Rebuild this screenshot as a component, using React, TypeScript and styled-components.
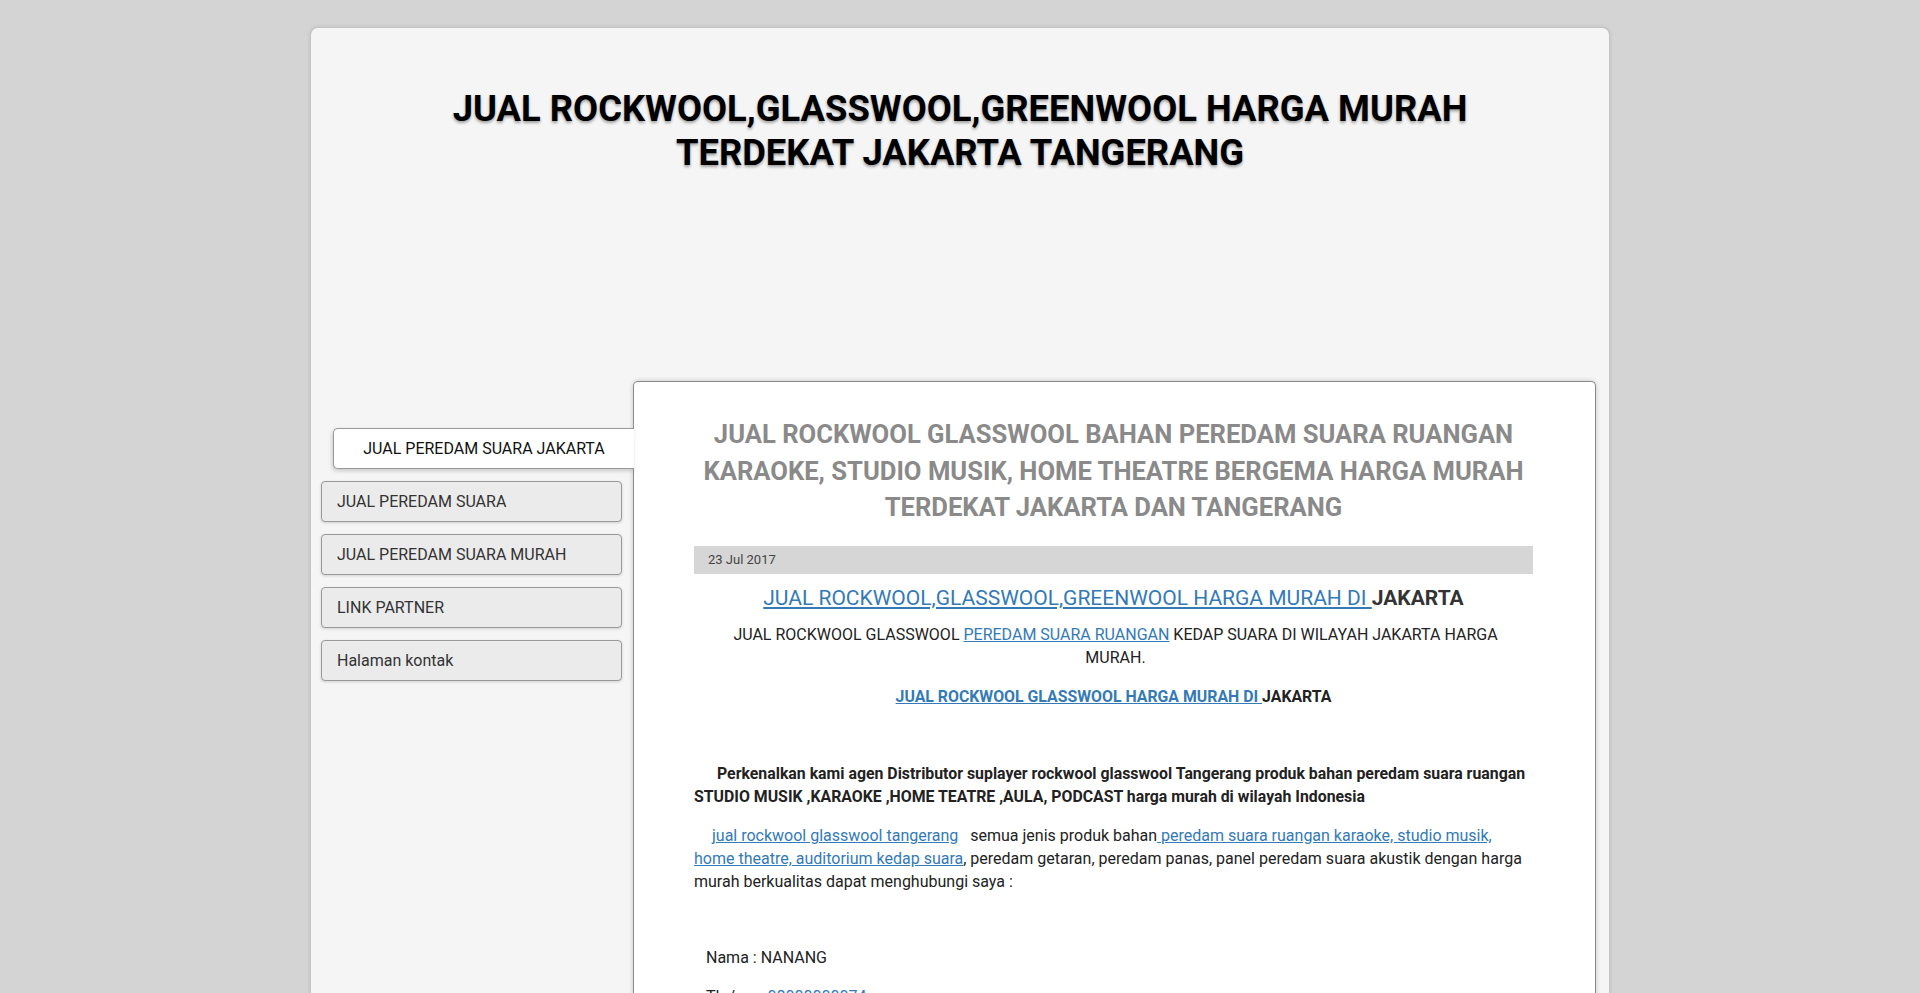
import React from "react";
import styled, { createGlobalStyle } from "styled-components";

const GlobalStyle = createGlobalStyle`
  html, body {
    margin: 0;
    padding: 0;
    background: #d4d4d4;
    font-family: Roboto, "Noto Sans", "Liberation Sans", sans-serif;
  }
  * { box-sizing: border-box; }
`;

const Page = styled.div`
  width: 1300px;
  margin: 27px auto 0;
  background: #f5f5f5;
  border: 1px solid #c4c4c4;
  border-bottom: none;
  border-radius: 8px 8px 0 0;
  box-shadow: 0 0 4px rgba(0, 0, 0, 0.12);
  min-height: 980px;
`;

const Header = styled.header`
  height: 353px;
  padding-top: 59px;
  text-align: center;
`;

const SiteTitle = styled.h1`
  margin: 0 auto;
  width: 1100px;
  font-size: 36.4px;
  line-height: 44px;
  font-weight: 700;
  color: #000;
  text-shadow: 0 2px 3px rgba(0, 0, 0, 0.35);
`;

const Body = styled.div`
  display: flex;
  align-items: flex-start;
  padding-left: 10px;
`;

const Sidebar = styled.nav`
  width: 312px;
  flex-shrink: 0;
  padding-top: 47px;
  display: flex;
  flex-direction: column;
  gap: 12px;
`;

const MenuItem = styled.a<{ $active?: boolean }>`
  display: flex;
  align-items: center;
  height: 41px;
  font-size: 16px;
  color: ${(p) => (p.$active ? "#111" : "#333")};
  text-decoration: none;
  border: 1px solid #999;
  border-radius: 4px;
  ${(p) =>
    p.$active
      ? `
    margin-left: 12px;
    margin-right: -1px;
    justify-content: center;
    background: #fff;
    border-right: none;
    border-radius: 5px 0 0 5px;
    box-shadow: -1px 2px 4px rgba(0, 0, 0, 0.18);
    position: relative;
    z-index: 2;
  `
      : `
    width: 301px;
    padding-left: 15px;
    background: #ebebeb;
    box-shadow: 0 1px 3px rgba(0, 0, 0, 0.15);
  `}
`;

const Panel = styled.main`
  width: 963px;
  min-height: 640px;
  background: #fff;
  border: 1px solid #8a8a8a;
  border-bottom: none;
  border-radius: 5px 5px 0 0;
  box-shadow: 0 0 5px rgba(0, 0, 0, 0.2);
  padding: 34px 62px 0 60px;
  position: relative;
  z-index: 1;
`;

const PostTitle = styled.h2`
  margin: 0 0 20px;
  font-size: 25.6px;
  line-height: 36.6px;
  font-weight: 700;
  color: #8a8a8a;
  text-align: center;
`;

const DateBar = styled.div`
  height: 28px;
  background: #d6d6d6;
  font-size: 13px;
  color: #444;
  display: flex;
  align-items: center;
  padding-left: 14px;
`;

const Link = styled.a`
  color: #337ab7;
  text-decoration: underline;
`;

const PostHeading = styled.h3`
  margin: 10px 0 11px;
  font-size: 21px;
  line-height: 28px;
  font-weight: 400;
  text-align: center;
  color: #333;
  b { font-weight: 700; }
`;

const Para = styled.p<{ $center?: boolean; $bold?: boolean; $indent?: number; $inset?: string }>`
  margin: 0 0 16px;
  font-size: ${(p) => (p.$bold ? "15.85px" : "16px")};
  line-height: 23px;
  color: #222;
  text-align: ${(p) => (p.$center ? "center" : "left")};
  font-weight: ${(p) => (p.$bold ? 700 : 400)};
  text-indent: ${(p) => p.$indent ?? 0}px;
  padding: ${(p) => p.$inset ?? "0"};
`;

const Spacer = styled.div<{ $h: number }>`
  height: ${(p) => p.$h}px;
`;

const menu = [
  "JUAL PEREDAM SUARA",
  "JUAL PEREDAM SUARA MURAH",
  "LINK PARTNER",
  "Halaman kontak",
];

export default function App() {
  return (
    <>
      <GlobalStyle />
      <Page>
        <Header>
          <SiteTitle>
            JUAL ROCKWOOL,GLASSWOOL,GREENWOOL HARGA MURAH TERDEKAT JAKARTA TANGERANG
          </SiteTitle>
        </Header>
        <Body>
          <Sidebar>
            <MenuItem $active href="#">JUAL PEREDAM SUARA JAKARTA</MenuItem>
            {menu.map((m) => (
              <MenuItem key={m} href="#">
                {m}
              </MenuItem>
            ))}
          </Sidebar>
          <Panel>
            <PostTitle>
              JUAL ROCKWOOL GLASSWOOL BAHAN PEREDAM SUARA RUANGAN KARAOKE, STUDIO MUSIK, HOME
              THEATRE BERGEMA HARGA MURAH TERDEKAT JAKARTA DAN TANGERANG
            </PostTitle>
            <DateBar>23 Jul 2017</DateBar>
            <PostHeading>
              <Link href="#">JUAL ROCKWOOL,GLASSWOOL,GREENWOOL HARGA MURAH DI </Link>
              <b>JAKARTA</b>
            </PostHeading>
            <Para $center $inset="0 34px 0 38px">
              JUAL ROCKWOOL GLASSWOOL <Link href="#">PEREDAM SUARA RUANGAN</Link> KEDAP SUARA DI
              WILAYAH JAKARTA HARGA MURAH.
            </Para>
            <Para $center $bold>
              <Link href="#">JUAL ROCKWOOL GLASSWOOL HARGA MURAH DI </Link>JAKARTA
            </Para>
            <Spacer $h={38} />
            <Para $bold $indent={23}>
              Perkenalkan kami agen Distributor suplayer rockwool glasswool Tangerang produk bahan
              peredam suara ruangan STUDIO MUSIK ,KARAOKE ,HOME TEATRE ,AULA, PODCAST harga murah
              di wilayah Indonesia
            </Para>
            <Para $indent={18}>
              <Link href="#">jual rockwool glasswool tangerang</Link>&nbsp;&nbsp; semua jenis produk
              bahan<Link href="#"> peredam suara ruangan karaoke, studio musik, home theatre,
              auditorium kedap suara</Link>, peredam getaran, peredam panas, panel peredam suara
              akustik dengan harga murah berkualitas dapat menghubungi saya :
            </Para>
            <Spacer $h={37} />
            <Para $indent={12}>Nama : NANANG</Para>
            <Para $indent={12}>
              Tlp/wa : <Link href="#">08000000074</Link>
            </Para>
          </Panel>
        </Body>
      </Page>
    </>
  );
}
